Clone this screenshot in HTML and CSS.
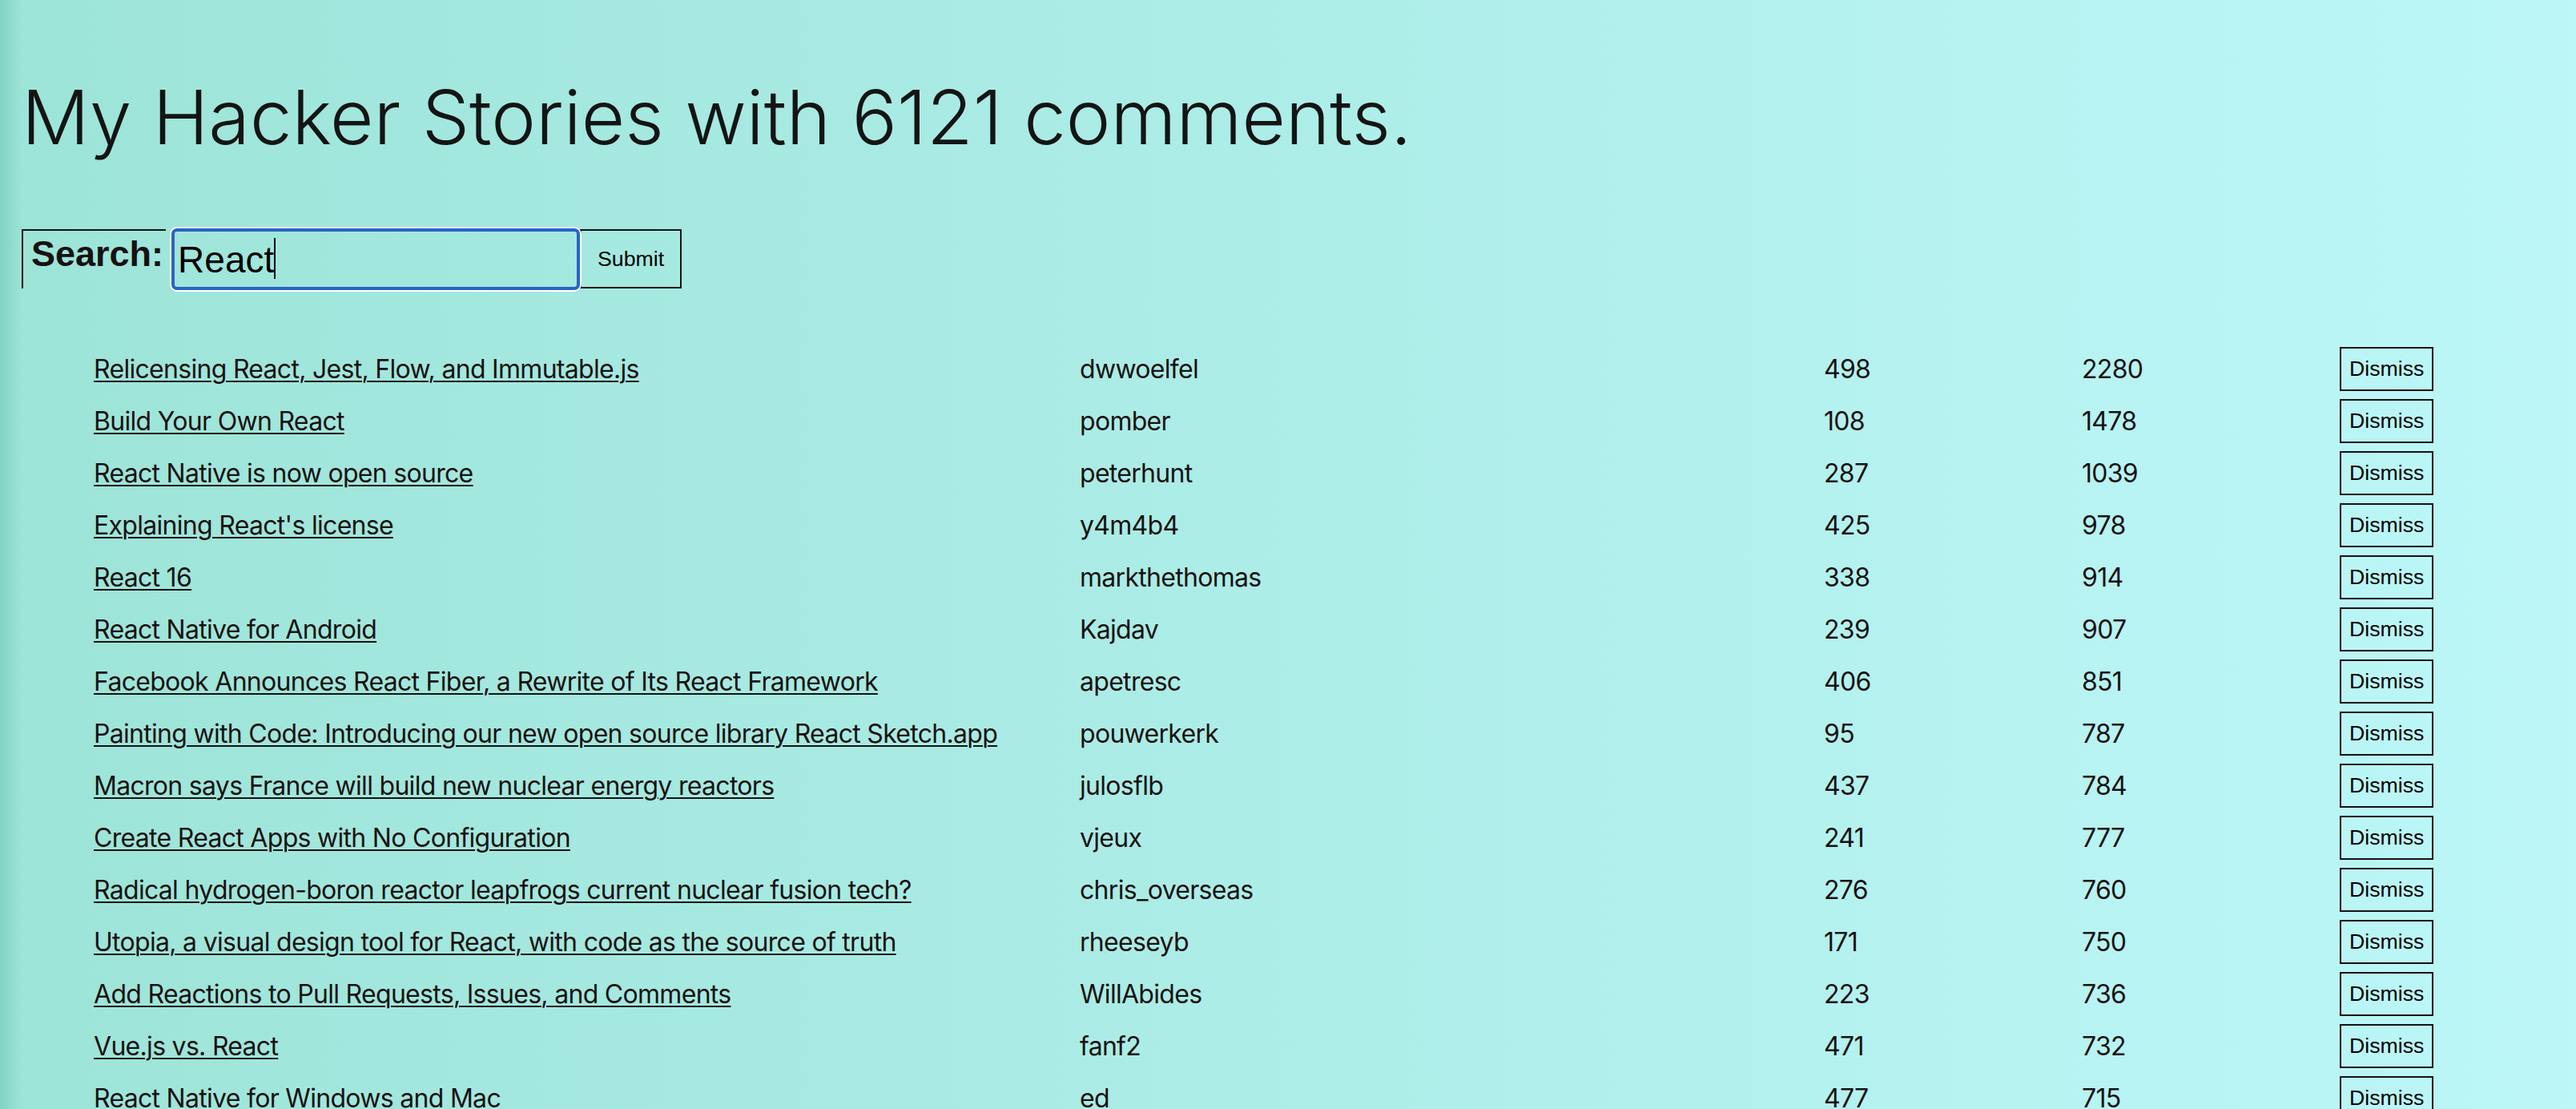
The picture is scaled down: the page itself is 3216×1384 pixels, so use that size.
FILE: index.html
```html
<!DOCTYPE html>
<html lang="en">
<head>
<meta charset="utf-8">
<title>My Hacker Stories</title>
<link rel="stylesheet" href="styles.css">
</head>
<body>
<div class="container">
  <h1 class="headline">My Hacker Stories with 6121 comments.</h1>
  <form class="search-form">
    <label class="label" for="search">Search:</label>
    <span class="input-wrap">
      <input id="search" class="input" type="text" value="React">
      <span class="caret"></span>
    </span>
    <button class="button button-large" type="button">Submit</button>
  </form>
  <ul class="list">
    <li class="item"><span class="c-title"><a href="#">Relicensing React, Jest, Flow, and Immutable.js</a></span><span class="c-author">dwwoelfel</span><span class="c-num">498</span><span class="c-num">2280</span><span class="c-act"><button class="button" type="button">Dismiss</button></span></li>
    <li class="item"><span class="c-title"><a href="#">Build Your Own React</a></span><span class="c-author">pomber</span><span class="c-num">108</span><span class="c-num">1478</span><span class="c-act"><button class="button" type="button">Dismiss</button></span></li>
    <li class="item"><span class="c-title"><a href="#">React Native is now open source</a></span><span class="c-author">peterhunt</span><span class="c-num">287</span><span class="c-num">1039</span><span class="c-act"><button class="button" type="button">Dismiss</button></span></li>
    <li class="item"><span class="c-title"><a href="#">Explaining React's license</a></span><span class="c-author">y4m4b4</span><span class="c-num">425</span><span class="c-num">978</span><span class="c-act"><button class="button" type="button">Dismiss</button></span></li>
    <li class="item"><span class="c-title"><a href="#">React 16</a></span><span class="c-author">markthethomas</span><span class="c-num">338</span><span class="c-num">914</span><span class="c-act"><button class="button" type="button">Dismiss</button></span></li>
    <li class="item"><span class="c-title"><a href="#">React Native for Android</a></span><span class="c-author">Kajdav</span><span class="c-num">239</span><span class="c-num">907</span><span class="c-act"><button class="button" type="button">Dismiss</button></span></li>
    <li class="item"><span class="c-title"><a href="#">Facebook Announces React Fiber, a Rewrite of Its React Framework</a></span><span class="c-author">apetresc</span><span class="c-num">406</span><span class="c-num">851</span><span class="c-act"><button class="button" type="button">Dismiss</button></span></li>
    <li class="item"><span class="c-title"><a href="#">Painting with Code: Introducing our new open source library React Sketch.app</a></span><span class="c-author">pouwerkerk</span><span class="c-num">95</span><span class="c-num">787</span><span class="c-act"><button class="button" type="button">Dismiss</button></span></li>
    <li class="item"><span class="c-title"><a href="#">Macron says France will build new nuclear energy reactors</a></span><span class="c-author">julosflb</span><span class="c-num">437</span><span class="c-num">784</span><span class="c-act"><button class="button" type="button">Dismiss</button></span></li>
    <li class="item"><span class="c-title"><a href="#">Create React Apps with No Configuration</a></span><span class="c-author">vjeux</span><span class="c-num">241</span><span class="c-num">777</span><span class="c-act"><button class="button" type="button">Dismiss</button></span></li>
    <li class="item"><span class="c-title"><a href="#">Radical hydrogen-boron reactor leapfrogs current nuclear fusion tech?</a></span><span class="c-author">chris_overseas</span><span class="c-num">276</span><span class="c-num">760</span><span class="c-act"><button class="button" type="button">Dismiss</button></span></li>
    <li class="item"><span class="c-title"><a href="#">Utopia, a visual design tool for React, with code as the source of truth</a></span><span class="c-author">rheeseyb</span><span class="c-num">171</span><span class="c-num">750</span><span class="c-act"><button class="button" type="button">Dismiss</button></span></li>
    <li class="item"><span class="c-title"><a href="#">Add Reactions to Pull Requests, Issues, and Comments</a></span><span class="c-author">WillAbides</span><span class="c-num">223</span><span class="c-num">736</span><span class="c-act"><button class="button" type="button">Dismiss</button></span></li>
    <li class="item"><span class="c-title"><a href="#">Vue.js vs. React</a></span><span class="c-author">fanf2</span><span class="c-num">471</span><span class="c-num">732</span><span class="c-act"><button class="button" type="button">Dismiss</button></span></li>
    <li class="item"><span class="c-title"><a href="#">React Native for Windows and Mac</a></span><span class="c-author">ed</span><span class="c-num">477</span><span class="c-num">715</span><span class="c-act"><button class="button" type="button">Dismiss</button></span></li>
  </ul>
</div>
</body>
</html>
```

FILE: styles.css
```css
html, body {
  margin: 0;
  padding: 0;
  height: 100%;
  overflow: hidden;
}

body {
  background:
    linear-gradient(to right, rgba(40, 150, 125, 0.22), rgba(40, 150, 125, 0) 28px),
    linear-gradient(to right, #9de4d8, #bdf7f8);
  color: #171212;
  font-family: Inter, "Noto Sans", sans-serif;
}

.container {
  padding: 90px 0 0 27px;
}

.headline {
  margin: 0;
  font-family: Inter, sans-serif;
  font-weight: 300;
  font-size: 94px;
  line-height: 113px;
  letter-spacing: 0;
  color: #141414;
}

.search-form {
  display: flex;
  align-items: flex-start;
  margin-top: 82px;
  font-family: "Liberation Sans", Arial, sans-serif;
}

.label {
  box-sizing: border-box;
  height: 74px;
  margin-top: 1px;
  margin-right: 5px;
  padding: 3px 3px 0 10px;
  border-top: 2px solid #171212;
  border-left: 2px solid #171212;
  font-weight: bold;
  font-size: 45px;
  line-height: 52px;
  color: #171212;
}

.input-wrap {
  position: relative;
  display: block;
  margin-left: 2px;
}

.input {
  display: block;
  box-sizing: border-box;
  width: 510px;
  height: 77px;
  padding: 0 0 0 4px;
  margin: 0;
  border: 4px solid #2b63c4;
  border-radius: 7px;
  box-shadow: 0 0 0 2px #ffffff;
  background: transparent;
  outline: none;
  font-family: "Liberation Sans", Arial, sans-serif;
  font-size: 46px;
  color: #000;
}

.caret {
  position: absolute;
  left: 128px;
  top: 12px;
  width: 2px;
  height: 51px;
  background: #000;
}

.button {
  background: transparent;
  border: 2px solid #171212;
  padding: 10px;
  margin: 0;
  font-family: "Liberation Sans", Arial, sans-serif;
  font-size: 26.67px;
  line-height: 31px;
  color: #000;
  cursor: pointer;
}

.button-large {
  margin-top: 1px;
  height: 74px;
  padding: 0 20px;
}

.list {
  list-style: none;
  margin: 71px 0 0 0;
  padding: 0 0 0 80px;
}

.item {
  display: flex;
  align-items: center;
  padding-bottom: 10px;
  font-size: 32px;
  line-height: 39px;
  letter-spacing: -0.7px;
}

.item > span {
  box-sizing: border-box;
  padding: 0 10px;
  white-space: nowrap;
  overflow: hidden;
}

.item .button {
  letter-spacing: 0;
}

.item a {
  color: inherit;
  text-decoration: underline;
  text-decoration-thickness: 2px;
  text-underline-offset: 3px;
}

.c-title { width: 1231px; flex: none; }
.c-author { width: 929px; flex: none; }
.c-num { width: 322px; flex: none; }
.c-act { flex: none; }
```
